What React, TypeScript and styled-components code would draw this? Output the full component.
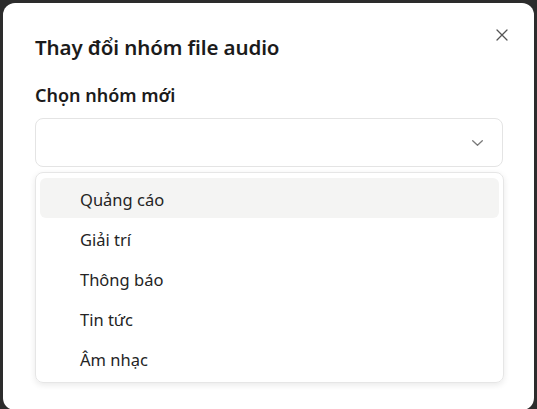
import React from "react";
import styled, { createGlobalStyle } from "styled-components";

const Global = createGlobalStyle`
  html, body { margin: 0; padding: 0; }
  body {
    background: #2c2c2c;
    font-family: "Noto Sans", "Open Sans", sans-serif;
    width: 537px;
    height: 409px;
    overflow: hidden;
  }
`;

const Screen = styled.div`
  padding: 3px 3px 0 3px;
  box-sizing: border-box;
  width: 537px;
  height: 409px;
`;

const Dialog = styled.div`
  box-sizing: border-box;
  width: 531px;
  height: 407px;
  background: #ffffff;
  border-radius: 12px;
  padding: 30px 31px 0 32px;
  display: flex;
  flex-direction: column;
`;

const Header = styled.div`
  display: flex;
  align-items: center;
  justify-content: space-between;
  height: 28px;
`;

const Title = styled.h2`
  margin: 0;
  font-size: 20.5px;
  line-height: 28px;
  font-weight: 600;
  color: #1b1b1b;
  letter-spacing: -0.1px;
`;

const CloseButton = styled.button`
  border: none;
  background: transparent;
  padding: 0;
  width: 16px;
  height: 16px;
  margin-right: -7px;
  margin-top: -25px;
  display: flex;
  align-items: center;
  justify-content: center;
  cursor: pointer;
  color: #555;
`;

const Label = styled.div`
  margin-top: 22px;
  font-size: 18px;
  line-height: 24px;
  font-weight: 600;
  color: #1b1b1b;
`;

const SelectBox = styled.div`
  margin-top: 11px;
  height: 49px;
  box-sizing: border-box;
  border: 1px solid #e4e4e4;
  border-radius: 8px;
  display: flex;
  align-items: center;
  justify-content: flex-end;
  padding-right: 19px;
  color: #7a7a7a;
`;

const Menu = styled.div`
  margin-top: 5px;
  margin-right: -1px;
  box-sizing: border-box;
  border: 1px solid #e6e6e6;
  border-radius: 8px;
  padding: 5px 4px 4px 4px;
  box-shadow: 0 2px 6px rgba(0, 0, 0, 0.09);
  display: flex;
  flex-direction: column;
`;

const Item = styled.div<{ $active?: boolean }>`
  height: 40px;
  box-sizing: border-box;
  padding-top: 3px;
  display: flex;
  align-items: center;
  padding-left: 40px;
  border-radius: 6px;
  font-size: 16.5px;
  color: #242424;
  background: ${(p) => (p.$active ? "#f4f4f3" : "transparent")};
`;

const items = ["Quảng cáo", "Giải trí", "Thông báo", "Tin tức", "Âm nhạc"];

export default function App() {
  return (
    <>
      <Global />
      <Screen>
        <Dialog>
          <Header>
            <Title>Thay đổi nhóm file audio</Title>
            <CloseButton aria-label="Đóng">
              <svg width="12" height="12" viewBox="0 0 12 12">
                <path d="M1 1 L11 11 M11 1 L1 11" stroke="currentColor" strokeWidth="1.3" strokeLinecap="round" fill="none" />
              </svg>
            </CloseButton>
          </Header>
          <Label>Chọn nhóm mới</Label>
          <SelectBox>
            <svg width="11" height="6" viewBox="0 0 11 6">
              <path d="M0.7 0.7 L5.5 5.2 L10.3 0.7" stroke="currentColor" strokeWidth="1.3" fill="none" strokeLinecap="round" strokeLinejoin="round" />
            </svg>
          </SelectBox>
          <Menu>
            {items.map((t, i) => (
              <Item key={t} $active={i === 0}>
                {t}
              </Item>
            ))}
          </Menu>
        </Dialog>
      </Screen>
    </>
  );
}
